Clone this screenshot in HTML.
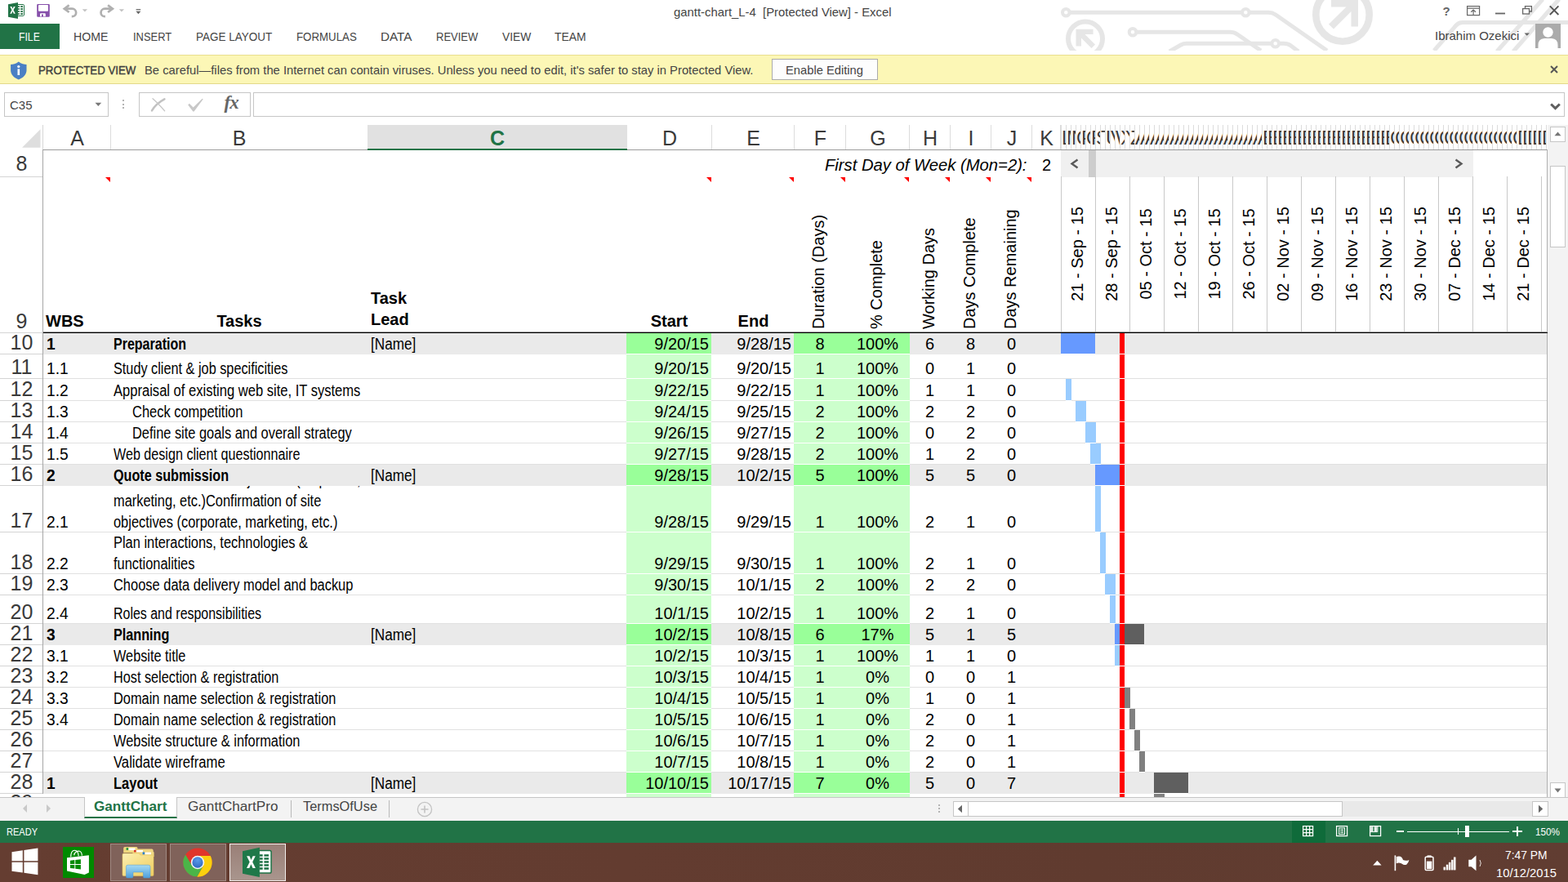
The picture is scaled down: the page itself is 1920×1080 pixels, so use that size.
<!DOCTYPE html>
<html lang="en"><head><meta charset="utf-8"><title>gantt-chart_L-4 [Protected View] - Excel</title>
<style>
html,body{margin:0;padding:0;background:#fff;}
body{width:1920px;height:1080px;overflow:hidden;font-family:"Liberation Sans",sans-serif;}
#root{position:relative;width:1920px;height:1080px;overflow:hidden;background:#fff;}
.a{position:absolute;box-sizing:border-box;}
.t{position:absolute;white-space:pre;display:block;}
svg{position:absolute;overflow:visible;}
.nh{position:absolute;top:153px;height:30px;width:6px;overflow:hidden;box-sizing:border-box;border-left:1px solid #dcdcdc;font-size:24px;line-height:30px;color:#3c3c3c;white-space:pre;}
.nh span{position:absolute;left:0px;top:1px;}
.rot{position:absolute;white-space:pre;font-size:20px;line-height:20px;color:#000;transform-origin:0 0;transform:rotate(-90deg);}
.wrap{position:absolute;font-size:20px;line-height:26px;color:#000;transform-origin:0 100%;white-space:normal;}
.rotc{position:absolute;white-space:pre;font-size:20px;line-height:20px;color:#000;transform:translate(-50%,-50%) rotate(-90deg);}
.sb{-webkit-text-stroke:0.45px #3f3f3f;}

</style></head>
<body>
<div id="root">
<svg style="left:1280px;top:0" width="640" height="62" viewBox="0 0 640 62">
<g fill="none" stroke="#e6e6e6" stroke-width="5">
<path d="M25 15.3 H273 Q278 15.3 282 18 L345 62"/>
<path d="M107 39.2 H226 Q231 39.2 235 42 L264 62"/>
<path d="M152 63 L166 55 Q169 53.3 173 53.3 H292 Q297 53.3 300 55.5 L310 63"/>
<path d="M476 62 L503 31 Q506 27.5 511 27.5 H640"/>
<path d="M553 63 L609 -1"/><path d="M573 63 L629 -1"/>
</g>
<g fill="#fff" stroke="#e6e6e6" stroke-width="4"><circle cx="25.3" cy="15.3" r="4.3"/><circle cx="245.3" cy="15.3" r="4.3"/><circle cx="107" cy="39.2" r="4.3"/><circle cx="281.7" cy="53.3" r="4.3"/></g>
<circle cx="49" cy="47.5" r="21" fill="none" stroke="#e6e6e6" stroke-width="6"/>
<path d="M37.5 35.8 H58.5 V42 H48.5 L61 54.5 L56.5 59 L44 46.5 V56.5 H37.5 Z" fill="#e6e6e6"/>
<circle cx="364" cy="18" r="32.7" fill="none" stroke="#e6e6e6" stroke-width="8.6"/>
<path d="M350 0 H383 V32.6 H374.5 V14 L353 35.6 L347 29.7 L368.5 8.6 H350 Z" fill="#e6e6e6"/>
</svg>
<div class="a" style="left:1280px;top:62px;width:640px;height:5px;background:#fff;"></div>
<svg style="left:0px;top:0px" width="70" height="28" viewBox="0 0 70 28">
<rect x="20.5" y="5.5" width="9" height="13.9" rx="1.2" fill="#fff" stroke="#217346" stroke-width="1"/>
<g fill="#1b6a3c">
<rect x="22.1" y="7.2" width="1.8" height="1.7"/><rect x="25.2" y="7.2" width="2.8" height="1.7"/>
<rect x="22.1" y="10.2" width="1.8" height="1.7"/><rect x="25.2" y="10.2" width="2.8" height="1.7"/>
<rect x="22.1" y="13.2" width="1.8" height="1.7"/><rect x="25.2" y="13.2" width="2.8" height="1.7"/>
<rect x="22.1" y="16.2" width="1.8" height="1.7"/><rect x="25.2" y="16.2" width="2.8" height="1.7"/>
</g>
<path d="M10 5.2 L22 3 V23 L10 20.8 Z" fill="#217346"/>
<path d="M12.3 8 H14.3 L15.5 10.8 L16.8 8 H18.7 L16.5 12.3 L18.8 16.7 H16.8 L15.5 13.8 L14.2 16.7 H12.2 L14.5 12.3 Z" fill="#fff"/>
<rect x="45.2" y="5" width="15.6" height="15.8" rx="1.1" fill="#8750ab"/>
<rect x="47" y="6" width="12" height="7.7" rx="0.8" fill="#fff"/>
<path d="M49 17.2 Q49 16.2 50 16.2 H54.8 Q55.8 16.2 55.8 17.2 V20.2 H52.9 V17.4 H51 V20.2 H49 Z" fill="#fff"/>
</svg>
<svg style="left:70px;top:0px" width="110" height="28" viewBox="70 0 110 28">
<g fill="none" stroke="#b0b0b0" stroke-width="2.7" stroke-linejoin="miter">
<path d="M84.6 6.4 L78.8 10.7 L84.6 15"/>
<path d="M79.5 10.7 H88.4 a4.75 4.75 0 0 1 0 9.5 H87.8"/>
<path d="M132.1 6.4 L137.9 10.7 L132.1 15"/>
<path d="M137.2 10.7 H128.3 a4.75 4.75 0 0 0 0 9.5 H128.9"/>
</g>
<path d="M100.8 11.2 H107 L103.9 14.4 Z" fill="#c2c2c2"/>
<path d="M145.8 11.2 H152 L148.9 14.4 Z" fill="#c2c2c2"/>
<path d="M166.6 11.7 H172.2" stroke="#666" stroke-width="1.2"/><path d="M166.4 13.7 H172.4 L169.4 17.2 Z" fill="#666"/>
</svg>
<span class="t " style="top:6.800000000000001px;left:825px;transform-origin:0 0;font-size:15px;line-height:15px;color:#444444;transform:scaleX(0.9906);">gantt-chart_L-4  [Protected View] - Excel</span>
<span class="t " style="top:5.600000000000001px;left:1766.5px;transform-origin:0 0;font-size:15px;line-height:15px;color:#666;font-weight:bold;">?</span>
<svg style="left:1796px;top:6px" width="118" height="18" viewBox="0 0 118 18">
<g fill="none" stroke="#666" stroke-width="1.2">
<rect x="0.6" y="1.6" width="15" height="11"/><path d="M0.6 4.2 H15.6"/>
<path d="M8.1 12 V6.2 M5.2 8.8 L8.1 6 L11 8.8"/>
</g>
<path d="M35 10.5 H47" stroke="#666" stroke-width="1.8"/>
<g fill="none" stroke="#666" stroke-width="1.3"><path d="M71.5 4.5 V1.6 H79.4 V8 H76.6"/><rect x="68.6" y="4.6" width="7.9" height="6.4" fill="#fff"/></g>
<path d="M101.8 1.4 L112.4 12 M112.4 1.4 L101.8 12" stroke="#555" stroke-width="1.9"/>
</svg>
<span class="t " style="top:35.8px;left:1757px;transform-origin:0 0;font-size:15px;line-height:15px;color:#444444;">Ibrahim Ozekici</span>
<svg style="left:1866px;top:40px" width="7.5" height="4.6" viewBox="0 0 8 5"><path d="M0.5 0.5H7.5L4 4.2Z" fill="#666"/></svg>
<svg style="left:1880px;top:29px" width="31" height="30" viewBox="0 0 31 30"><rect width="31" height="30" fill="#ababab"/>
<circle cx="15.5" cy="10.5" r="6.2" fill="#fff"/><path d="M3.5 30 V26 Q3.5 18.5 11 18 H20 Q27.5 18.5 27.5 26 V30 Z" fill="#fff"/></svg>
<div class="a" style="left:0px;top:29px;width:73px;height:31px;background:#217346;"></div>
<span class="t " style="top:37.3px;left:23px;transform-origin:0 0;font-size:15px;line-height:15px;color:#fff;transform:scaleX(0.8142);">FILE</span>
<span class="t " style="top:37.3px;left:90.3px;transform-origin:0 0;font-size:15px;line-height:15px;color:#444444;transform:scaleX(0.9422);">HOME</span>
<span class="t " style="top:37.3px;left:162.5px;transform-origin:0 0;font-size:15px;line-height:15px;color:#444444;transform:scaleX(0.8605);">INSERT</span>
<span class="t " style="top:37.3px;left:239.5px;transform-origin:0 0;font-size:15px;line-height:15px;color:#444444;transform:scaleX(0.8993);">PAGE LAYOUT</span>
<span class="t " style="top:37.3px;left:362.5px;transform-origin:0 0;font-size:15px;line-height:15px;color:#444444;transform:scaleX(0.8855);">FORMULAS</span>
<span class="t " style="top:37.3px;left:466.2px;transform-origin:0 0;font-size:15px;line-height:15px;color:#444444;transform:scaleX(1.0164);">DATA</span>
<span class="t " style="top:37.3px;left:534.3px;transform-origin:0 0;font-size:15px;line-height:15px;color:#444444;transform:scaleX(0.8667);">REVIEW</span>
<span class="t " style="top:37.3px;left:614.5px;transform-origin:0 0;font-size:15px;line-height:15px;color:#444444;transform:scaleX(0.9206);">VIEW</span>
<span class="t " style="top:37.3px;left:679px;transform-origin:0 0;font-size:15px;line-height:15px;color:#444444;transform:scaleX(0.9263);">TEAM</span>
<div class="a" style="left:0px;top:67px;width:1920px;height:36px;background:#fcf7b6;border-top:1px solid #e9df8f;border-bottom:1px solid #e3d98a;"></div>
<svg style="left:12.2px;top:75px" width="21.6" height="23" viewBox="0 0 20 23" preserveAspectRatio="none">
<path d="M10 0.6 C7 3.4 3.6 4 1 4 V11 C1 16.5 5 20.5 10 22.4 C15 20.5 19 16.5 19 11 V4 C16.4 4 13 3.4 10 0.6 Z" fill="#4a7fc4"/>
<circle cx="10" cy="6.6" r="1.5" fill="#fff"/><rect x="8.8" y="9.4" width="2.4" height="7.6" fill="#fff"/></svg>
<span class="t sb" style="top:78.1px;left:46.5px;transform-origin:0 0;font-size:15px;line-height:15px;color:#3f3f3f;transform:scaleX(0.8836);">PROTECTED VIEW</span>
<span class="t " style="top:78.1px;left:176.5px;transform-origin:0 0;font-size:15px;line-height:15px;color:#444444;transform:scaleX(0.9846);">Be careful—files from the Internet can contain viruses. Unless you need to edit, it's safer to stay in Protected View.</span>
<div class="a" style="left:945px;top:72px;width:130px;height:26px;background:#fdfdfd;border:1px solid #ababab;"></div>
<span class="t " style="top:78.1px;left:961.5px;transform-origin:0 0;font-size:15px;line-height:15px;color:#444444;transform:scaleX(0.9819);">Enable Editing</span>
<svg style="left:1898px;top:80px" width="10" height="10" viewBox="0 0 10 10"><path d="M1 1L9 9M9 1L1 9" stroke="#555" stroke-width="1.9"/></svg>
<div class="a" style="left:5px;top:113px;width:128px;height:30px;background:#fff;border:1px solid #c6c6c6;"></div>
<span class="t " style="top:121.3px;left:12px;transform-origin:0 0;font-size:15px;line-height:15px;color:#444444;">C35</span>
<svg style="left:116px;top:125px" width="9" height="6" viewBox="0 0 9 6"><path d="M0.5 0.8H8.2L4.35 5Z" fill="#777"/></svg>
<div class="a" style="left:150px;top:122px;width:2px;height:2px;background:#b4b4b4;"></div>
<div class="a" style="left:150px;top:126.5px;width:2px;height:2px;background:#b4b4b4;"></div>
<div class="a" style="left:150px;top:131px;width:2px;height:2px;background:#b4b4b4;"></div>
<div class="a" style="left:170px;top:113px;width:137px;height:30px;background:#fff;border:1px solid #c6c6c6;"></div>
<svg style="left:180px;top:112px" width="80" height="32" viewBox="180 112 80 32">
<path d="M186 135.4 Q191 127 201.4 121.4" stroke="#c2c2c2" stroke-width="2.5" fill="none" stroke-linecap="round"/>
<path d="M187 120.8 Q193 126 201.6 135.8" stroke="#c6c6c6" stroke-width="1.3" fill="none" stroke-linecap="round"/>
<path d="M230.2 128.4 L231.8 126.8 L236.6 131.4 L247.7 120.7 L248.7 121.5 L237.6 136.5 L236.3 136.5 Z" fill="#c8c8c8"/>
</svg>
<span class="t" style="left:274.5px;top:113px;font-family:'Liberation Serif',serif;font-style:italic;font-weight:bold;font-size:23px;line-height:26px;color:#666;letter-spacing:-1px">fx</span>
<div class="a" style="left:310px;top:113px;width:1606px;height:30px;background:#fff;border:1px solid #c6c6c6;"></div>
<svg style="left:1898px;top:126px" width="13" height="9" viewBox="0 0 13 9"><path d="M1.2 1.5 L6.5 6.6 L11.8 1.5" stroke="#5e5e5e" stroke-width="3" fill="none"/></svg>
<div class="a" style="left:0px;top:153px;width:1894px;height:31px;background:#fff;"></div>
<svg style="left:25.5px;top:157px" width="24.5" height="25" viewBox="0 0 24 24"><path d="M23 1 V23 H1 Z" fill="#dedede"/></svg>
<div class="a" style="left:450px;top:153px;width:318px;height:31px;background:#e1e1e1;border-bottom:2px solid #217346;"></div>
<span class="t " style="top:157.34px;left:86.16px;transform-origin:0 0;font-size:25px;line-height:25px;color:#3a3a3a;">A</span>
<div class="a" style="left:135px;top:153px;width:1px;height:30px;background:#dcdcdc;"></div>
<span class="t " style="top:157.34px;left:284.66px;transform-origin:0 0;font-size:25px;line-height:25px;color:#3a3a3a;">B</span>
<span class="t " style="top:157.34px;left:599.97px;transform-origin:0 0;font-size:25px;line-height:25px;color:#217346;font-weight:bold;">C</span>
<span class="t " style="top:157.34px;left:810.97px;transform-origin:0 0;font-size:25px;line-height:25px;color:#3a3a3a;">D</span>
<div class="a" style="left:871px;top:153px;width:1px;height:30px;background:#dcdcdc;"></div>
<span class="t " style="top:157.34px;left:914.16px;transform-origin:0 0;font-size:25px;line-height:25px;color:#3a3a3a;">E</span>
<div class="a" style="left:972px;top:153px;width:1px;height:30px;background:#dcdcdc;"></div>
<span class="t " style="top:157.34px;left:996.86px;transform-origin:0 0;font-size:25px;line-height:25px;color:#3a3a3a;">F</span>
<div class="a" style="left:1035px;top:153px;width:1px;height:30px;background:#dcdcdc;"></div>
<span class="t " style="top:157.34px;left:1065.27px;transform-origin:0 0;font-size:25px;line-height:25px;color:#3a3a3a;">G</span>
<div class="a" style="left:1113px;top:153px;width:1px;height:30px;background:#dcdcdc;"></div>
<span class="t " style="top:157.34px;left:1129.97px;transform-origin:0 0;font-size:25px;line-height:25px;color:#3a3a3a;">H</span>
<div class="a" style="left:1163px;top:153px;width:1px;height:30px;background:#dcdcdc;"></div>
<span class="t " style="top:157.34px;left:1185.52px;transform-origin:0 0;font-size:25px;line-height:25px;color:#3a3a3a;">I</span>
<div class="a" style="left:1213px;top:153px;width:1px;height:30px;background:#dcdcdc;"></div>
<span class="t " style="top:157.34px;left:1232.75px;transform-origin:0 0;font-size:25px;line-height:25px;color:#3a3a3a;">J</span>
<div class="a" style="left:1263px;top:153px;width:1px;height:30px;background:#dcdcdc;"></div>
<span class="t " style="top:157.34px;left:1273.16px;transform-origin:0 0;font-size:25px;line-height:25px;color:#3a3a3a;">K</span>
<div class="a" style="left:1298px;top:153px;width:1px;height:30px;background:#dcdcdc;"></div>
<div class="a" style="left:52px;top:153px;width:1px;height:30px;background:#d6d6d6;"></div>
<div class="nh" style="left:1299px"><span>L</span></div>
<div class="nh" style="left:1305px"><span>M</span></div>
<div class="nh" style="left:1311px"><span>N</span></div>
<div class="nh" style="left:1317px"><span>O</span></div>
<div class="nh" style="left:1323px"><span>P</span></div>
<div class="nh" style="left:1329px"><span>Q</span></div>
<div class="nh" style="left:1335px"><span>R</span></div>
<div class="nh" style="left:1341px"><span>S</span></div>
<div class="nh" style="left:1347px"><span>T</span></div>
<div class="nh" style="left:1353px"><span>U</span></div>
<div class="nh" style="left:1359px"><span>V</span></div>
<div class="nh" style="left:1365px"><span>W</span></div>
<div class="nh" style="left:1371px"><span>X</span></div>
<div class="nh" style="left:1377px"><span>Y</span></div>
<div class="nh" style="left:1383px"><span>Z</span></div>
<div class="nh" style="left:1389px"><span>AA</span></div>
<div class="nh" style="left:1395px"><span>AB</span></div>
<div class="nh" style="left:1401px"><span>AC</span></div>
<div class="nh" style="left:1407px"><span>AD</span></div>
<div class="nh" style="left:1413px"><span>AE</span></div>
<div class="nh" style="left:1419px"><span>AF</span></div>
<div class="nh" style="left:1425px"><span>AG</span></div>
<div class="nh" style="left:1431px"><span>AH</span></div>
<div class="nh" style="left:1437px"><span>AI</span></div>
<div class="nh" style="left:1443px"><span>AJ</span></div>
<div class="nh" style="left:1449px"><span>AK</span></div>
<div class="nh" style="left:1455px"><span>AL</span></div>
<div class="nh" style="left:1461px"><span>AM</span></div>
<div class="nh" style="left:1467px"><span>AN</span></div>
<div class="nh" style="left:1473px"><span>AO</span></div>
<div class="nh" style="left:1479px"><span>AP</span></div>
<div class="nh" style="left:1485px"><span>AQ</span></div>
<div class="nh" style="left:1491px"><span>AR</span></div>
<div class="nh" style="left:1497px"><span>AS</span></div>
<div class="nh" style="left:1503px"><span>AT</span></div>
<div class="nh" style="left:1509px"><span>AU</span></div>
<div class="nh" style="left:1515px"><span>AV</span></div>
<div class="nh" style="left:1521px"><span>AW</span></div>
<div class="nh" style="left:1527px"><span>AX</span></div>
<div class="nh" style="left:1533px"><span>AY</span></div>
<div class="nh" style="left:1539px"><span>AZ</span></div>
<div class="nh" style="left:1545px"><span>BA</span></div>
<div class="nh" style="left:1551px"><span>BB</span></div>
<div class="nh" style="left:1557px"><span>BC</span></div>
<div class="nh" style="left:1563px"><span>BD</span></div>
<div class="nh" style="left:1569px"><span>BE</span></div>
<div class="nh" style="left:1575px"><span>BF</span></div>
<div class="nh" style="left:1581px"><span>BG</span></div>
<div class="nh" style="left:1587px"><span>BH</span></div>
<div class="nh" style="left:1593px"><span>BI</span></div>
<div class="nh" style="left:1599px"><span>BJ</span></div>
<div class="nh" style="left:1605px"><span>BK</span></div>
<div class="nh" style="left:1611px"><span>BL</span></div>
<div class="nh" style="left:1617px"><span>BM</span></div>
<div class="nh" style="left:1623px"><span>BN</span></div>
<div class="nh" style="left:1629px"><span>BO</span></div>
<div class="nh" style="left:1635px"><span>BP</span></div>
<div class="nh" style="left:1641px"><span>BQ</span></div>
<div class="nh" style="left:1647px"><span>BR</span></div>
<div class="nh" style="left:1653px"><span>BS</span></div>
<div class="nh" style="left:1659px"><span>BT</span></div>
<div class="nh" style="left:1665px"><span>BU</span></div>
<div class="nh" style="left:1671px"><span>BV</span></div>
<div class="nh" style="left:1677px"><span>BW</span></div>
<div class="nh" style="left:1683px"><span>BX</span></div>
<div class="nh" style="left:1689px"><span>BY</span></div>
<div class="nh" style="left:1695px"><span>BZ</span></div>
<div class="nh" style="left:1701px"><span>CA</span></div>
<div class="nh" style="left:1707px"><span>CB</span></div>
<div class="nh" style="left:1713px"><span>CC</span></div>
<div class="nh" style="left:1719px"><span>CD</span></div>
<div class="nh" style="left:1725px"><span>CE</span></div>
<div class="nh" style="left:1731px"><span>CF</span></div>
<div class="nh" style="left:1737px"><span>CG</span></div>
<div class="nh" style="left:1743px"><span>CH</span></div>
<div class="nh" style="left:1749px"><span>CI</span></div>
<div class="nh" style="left:1755px"><span>CJ</span></div>
<div class="nh" style="left:1761px"><span>CK</span></div>
<div class="nh" style="left:1767px"><span>CL</span></div>
<div class="nh" style="left:1773px"><span>CM</span></div>
<div class="nh" style="left:1779px"><span>CN</span></div>
<div class="nh" style="left:1785px"><span>CO</span></div>
<div class="nh" style="left:1791px"><span>CP</span></div>
<div class="nh" style="left:1797px"><span>CQ</span></div>
<div class="nh" style="left:1803px"><span>CR</span></div>
<div class="nh" style="left:1809px"><span>CS</span></div>
<div class="nh" style="left:1815px"><span>CT</span></div>
<div class="nh" style="left:1821px"><span>CU</span></div>
<div class="nh" style="left:1827px"><span>CV</span></div>
<div class="nh" style="left:1833px"><span>CW</span></div>
<div class="nh" style="left:1839px"><span>CX</span></div>
<div class="nh" style="left:1845px"><span>CY</span></div>
<div class="nh" style="left:1851px"><span>CZ</span></div>
<div class="nh" style="left:1857px"><span>DA</span></div>
<div class="nh" style="left:1863px"><span>DB</span></div>
<div class="nh" style="left:1869px"><span>DC</span></div>
<div class="nh" style="left:1875px"><span>DD</span></div>
<div class="nh" style="left:1881px"><span>DE</span></div>
<div class="nh" style="left:1887px"><span>DF</span></div>
<div class="a" style="left:1893px;top:153px;width:1px;height:30px;background:#dcdcdc;"></div>
<div class="a" style="left:53px;top:183px;width:1841px;height:1px;background:#9b9b9b;"></div>
<div class="a" style="left:450px;top:182px;width:318px;height:2px;background:#217346;"></div>
<div class="a" style="left:52px;top:183px;width:1px;height:793px;background:#a6a6a6;"></div>
<div class="a" style="left:1894px;top:183px;width:1px;height:793px;background:#b0b0b0;"></div>
<span class="t " style="top:188.14000000000001px;left:19.55px;transform-origin:0 0;font-size:25px;line-height:25px;color:#3a3a3a;">8</span>
<div class="a" style="left:0px;top:216px;width:52px;height:1px;background:#d4d4d4;"></div>
<span class="t " style="top:191.57px;left:1010px;transform-origin:0 0;font-size:20px;line-height:20px;color:#000;font-style:italic;transform:scaleX(1.0114);">First Day of Week (Mon=2):</span>
<span class="t " style="top:191.57px;left:1275.94px;transform-origin:0 0;font-size:20px;line-height:20px;color:#000;">2</span>
<div class="a" style="left:1299px;top:184px;width:505px;height:33px;background:#f0f0f0;"></div>
<div class="a" style="left:1333px;top:184px;width:9px;height:33px;background:#cdcdcd;"></div>
<svg style="left:1310px;top:194px" width="12" height="13" viewBox="0 0 12 13"><path d="M9.5 1.5 L2.5 6.5 L9.5 11.5" stroke="#5a5a5a" stroke-width="2.4" fill="none"/></svg>
<svg style="left:1780px;top:194px" width="12" height="13" viewBox="0 0 12 13"><path d="M2.5 1.5 L9.5 6.5 L2.5 11.5" stroke="#5a5a5a" stroke-width="2.4" fill="none"/></svg>
<span class="t " style="top:381.23999999999995px;left:19.55px;transform-origin:0 0;font-size:25px;line-height:25px;color:#3a3a3a;">9</span>
<div class="a" style="left:0px;top:407px;width:52px;height:1px;background:#d4d4d4;"></div>
<svg style="left:129px;top:217px" width="6" height="6" viewBox="0 0 6 6"><path d="M0 0H6V6Z" fill="#ff0000"/></svg>
<svg style="left:865px;top:217px" width="6" height="6" viewBox="0 0 6 6"><path d="M0 0H6V6Z" fill="#ff0000"/></svg>
<svg style="left:966px;top:217px" width="6" height="6" viewBox="0 0 6 6"><path d="M0 0H6V6Z" fill="#ff0000"/></svg>
<svg style="left:1029px;top:217px" width="6" height="6" viewBox="0 0 6 6"><path d="M0 0H6V6Z" fill="#ff0000"/></svg>
<svg style="left:1107px;top:217px" width="6" height="6" viewBox="0 0 6 6"><path d="M0 0H6V6Z" fill="#ff0000"/></svg>
<svg style="left:1157px;top:217px" width="6" height="6" viewBox="0 0 6 6"><path d="M0 0H6V6Z" fill="#ff0000"/></svg>
<svg style="left:1207px;top:217px" width="6" height="6" viewBox="0 0 6 6"><path d="M0 0H6V6Z" fill="#ff0000"/></svg>
<svg style="left:1257px;top:217px" width="6" height="6" viewBox="0 0 6 6"><path d="M0 0H6V6Z" fill="#ff0000"/></svg>
<span class="t " style="top:383.07px;left:56px;transform-origin:0 0;font-size:20px;line-height:20px;color:#000;font-weight:bold;">WBS</span>
<span class="t " style="top:383.07px;left:265.38px;transform-origin:0 0;font-size:20px;line-height:20px;color:#000;font-weight:bold;">Tasks</span>
<span class="t " style="top:355.07px;left:454px;transform-origin:0 0;font-size:20px;line-height:20px;color:#000;font-weight:bold;">Task</span>
<span class="t " style="top:381.07px;left:454px;transform-origin:0 0;font-size:20px;line-height:20px;color:#000;font-weight:bold;">Lead</span>
<span class="t " style="top:383.07px;left:796.71px;transform-origin:0 0;font-size:20px;line-height:20px;color:#000;font-weight:bold;">Start</span>
<span class="t " style="top:383.07px;left:903.61px;transform-origin:0 0;font-size:20px;line-height:20px;color:#000;font-weight:bold;">End</span>
<span class="rot" style="left:992.0px;top:403px">Duration (Days)</span>
<span class="rot" style="left:1062.5px;top:403px">% Complete</span>
<span class="rot" style="left:1126.5px;top:403px">Working Days</span>
<span class="rot" style="left:1176.5px;top:403px">Days Complete</span>
<span class="rot" style="left:1226.5px;top:403px">Days Remaining</span>
<div class="a" style="left:1299px;top:216px;width:1px;height:191px;background:#c9c9c9;"></div>
<div class="a" style="left:1341px;top:216px;width:1px;height:191px;background:#c9c9c9;"></div>
<div class="a" style="left:1383px;top:216px;width:1px;height:191px;background:#c9c9c9;"></div>
<div class="a" style="left:1425px;top:216px;width:1px;height:191px;background:#c9c9c9;"></div>
<div class="a" style="left:1467px;top:216px;width:1px;height:191px;background:#c9c9c9;"></div>
<div class="a" style="left:1509px;top:216px;width:1px;height:191px;background:#c9c9c9;"></div>
<div class="a" style="left:1551px;top:216px;width:1px;height:191px;background:#c9c9c9;"></div>
<div class="a" style="left:1593px;top:216px;width:1px;height:191px;background:#c9c9c9;"></div>
<div class="a" style="left:1635px;top:216px;width:1px;height:191px;background:#c9c9c9;"></div>
<div class="a" style="left:1677px;top:216px;width:1px;height:191px;background:#c9c9c9;"></div>
<div class="a" style="left:1719px;top:216px;width:1px;height:191px;background:#c9c9c9;"></div>
<div class="a" style="left:1761px;top:216px;width:1px;height:191px;background:#c9c9c9;"></div>
<div class="a" style="left:1803px;top:216px;width:1px;height:191px;background:#c9c9c9;"></div>
<div class="a" style="left:1845px;top:216px;width:1px;height:191px;background:#c9c9c9;"></div>
<div class="a" style="left:1887px;top:216px;width:1px;height:191px;background:#c9c9c9;"></div>
<span class="rotc" style="left:1318.8px;top:310.6px">21 - Sep - 15</span>
<span class="rotc" style="left:1360.8px;top:310.6px">28 - Sep - 15</span>
<span class="rotc" style="left:1402.8px;top:310.6px">05 - Oct - 15</span>
<span class="rotc" style="left:1444.8px;top:310.6px">12 - Oct - 15</span>
<span class="rotc" style="left:1486.8px;top:310.6px">19 - Oct - 15</span>
<span class="rotc" style="left:1528.8px;top:310.6px">26 - Oct - 15</span>
<span class="rotc" style="left:1570.8px;top:310.6px">02 - Nov - 15</span>
<span class="rotc" style="left:1612.8px;top:310.6px">09 - Nov - 15</span>
<span class="rotc" style="left:1654.8px;top:310.6px">16 - Nov - 15</span>
<span class="rotc" style="left:1696.8px;top:310.6px">23 - Nov - 15</span>
<span class="rotc" style="left:1738.8px;top:310.6px">30 - Nov - 15</span>
<span class="rotc" style="left:1780.8px;top:310.6px">07 - Dec - 15</span>
<span class="rotc" style="left:1822.8px;top:310.6px">14 - Dec - 15</span>
<span class="rotc" style="left:1864.8px;top:310.6px">21 - Dec - 15</span>
<div class="a" style="left:53px;top:406px;width:1842px;height:1px;background:#9a9a9a;"></div>
<div class="a" style="left:53px;top:407px;width:1842px;height:1px;background:#000;"></div>
<span class="t " style="top:407.23999999999995px;left:12.59px;transform-origin:0 0;font-size:25px;line-height:25px;color:#3a3a3a;">10</span>
<div class="a" style="left:0px;top:433px;width:52px;height:1px;background:#d4d4d4;"></div>
<div class="a" style="left:53px;top:408px;width:1841px;height:26px;background:#eaeaea;"></div>
<div class="a" style="left:767px;top:408px;width:104px;height:26px;background:#99ff99;border-bottom:1px solid #fff;"></div>
<div class="a" style="left:972px;top:408px;width:142px;height:26px;background:#99ff99;border-bottom:1px solid #fff;"></div>
<span class="t " style="top:411.07px;left:56.5px;transform-origin:0 0;font-size:20px;line-height:20px;color:#000;font-weight:bold;transform:scaleX(0.9600);">1</span>
<span class="t " style="top:411.07px;left:138.6px;transform-origin:0 0;font-size:20px;line-height:20px;color:#000;font-weight:bold;transform:scaleX(0.8007);">Preparation</span>
<span class="t " style="top:411.07px;left:454px;transform-origin:0 0;font-size:20px;line-height:20px;color:#000;transform:scaleX(0.8578);">[Name]</span>
<span class="t " style="top:411.07px;right:1052px;transform-origin:100% 0;font-size:20px;line-height:20px;color:#000;">9/20/15</span>
<span class="t " style="top:411.07px;right:951px;transform-origin:100% 0;font-size:20px;line-height:20px;color:#000;">9/28/15</span>
<span class="t " style="top:411.07px;left:998.44px;transform-origin:0 0;font-size:20px;line-height:20px;color:#000;">8</span>
<span class="t " style="top:411.07px;left:1048.92px;transform-origin:0 0;font-size:20px;line-height:20px;color:#000;">100%</span>
<span class="t " style="top:411.07px;left:1132.94px;transform-origin:0 0;font-size:20px;line-height:20px;color:#000;">6</span>
<span class="t " style="top:411.07px;left:1182.94px;transform-origin:0 0;font-size:20px;line-height:20px;color:#000;">8</span>
<span class="t " style="top:411.07px;left:1232.94px;transform-origin:0 0;font-size:20px;line-height:20px;color:#000;">0</span>
<div class="a" style="left:1299px;top:408px;width:42px;height:26px;background:#6699ff;border-bottom:1px solid #fff;"></div>
<div class="a" style="left:1371px;top:408px;width:6px;height:26px;background:#ff0000;border-bottom:1px solid #fff;"></div>
<span class="t " style="top:437.23999999999995px;left:13.52px;transform-origin:0 0;font-size:25px;line-height:25px;color:#3a3a3a;">11</span>
<div class="a" style="left:0px;top:463px;width:52px;height:1px;background:#d4d4d4;"></div>
<div class="a" style="left:53px;top:463px;width:1841px;height:1px;background:#e1e1e1;"></div>
<div class="a" style="left:767px;top:434px;width:104px;height:30px;background:#ccffcc;border-bottom:1px solid #fff;"></div>
<div class="a" style="left:972px;top:434px;width:142px;height:30px;background:#ccffcc;border-bottom:1px solid #fff;"></div>
<span class="t " style="top:441.07px;left:56.5px;transform-origin:0 0;font-size:20px;line-height:20px;color:#000;transform:scaleX(0.9600);">1.1</span>
<span class="t " style="top:441.07px;left:138.6px;transform-origin:0 0;font-size:20px;line-height:20px;color:#000;transform:scaleX(0.8134);">Study client &amp; job specificities</span>
<span class="t " style="top:441.07px;right:1052px;transform-origin:100% 0;font-size:20px;line-height:20px;color:#000;">9/20/15</span>
<span class="t " style="top:441.07px;right:951px;transform-origin:100% 0;font-size:20px;line-height:20px;color:#000;">9/20/15</span>
<span class="t " style="top:441.07px;left:998.44px;transform-origin:0 0;font-size:20px;line-height:20px;color:#000;">1</span>
<span class="t " style="top:441.07px;left:1048.92px;transform-origin:0 0;font-size:20px;line-height:20px;color:#000;">100%</span>
<span class="t " style="top:441.07px;left:1132.94px;transform-origin:0 0;font-size:20px;line-height:20px;color:#000;">0</span>
<span class="t " style="top:441.07px;left:1182.94px;transform-origin:0 0;font-size:20px;line-height:20px;color:#000;">1</span>
<span class="t " style="top:441.07px;left:1232.94px;transform-origin:0 0;font-size:20px;line-height:20px;color:#000;">0</span>
<div class="a" style="left:1371px;top:434px;width:6px;height:30px;background:#ff0000;border-bottom:1px solid #fff;"></div>
<span class="t " style="top:464.23999999999995px;left:12.59px;transform-origin:0 0;font-size:25px;line-height:25px;color:#3a3a3a;">12</span>
<div class="a" style="left:0px;top:490px;width:52px;height:1px;background:#d4d4d4;"></div>
<div class="a" style="left:53px;top:490px;width:1841px;height:1px;background:#e1e1e1;"></div>
<div class="a" style="left:767px;top:464px;width:104px;height:27px;background:#ccffcc;border-bottom:1px solid #fff;"></div>
<div class="a" style="left:972px;top:464px;width:142px;height:27px;background:#ccffcc;border-bottom:1px solid #fff;"></div>
<span class="t " style="top:468.07px;left:56.5px;transform-origin:0 0;font-size:20px;line-height:20px;color:#000;transform:scaleX(0.9600);">1.2</span>
<span class="t " style="top:468.07px;left:138.6px;transform-origin:0 0;font-size:20px;line-height:20px;color:#000;transform:scaleX(0.8277);">Appraisal of existing web site, IT systems</span>
<span class="t " style="top:468.07px;right:1052px;transform-origin:100% 0;font-size:20px;line-height:20px;color:#000;">9/22/15</span>
<span class="t " style="top:468.07px;right:951px;transform-origin:100% 0;font-size:20px;line-height:20px;color:#000;">9/22/15</span>
<span class="t " style="top:468.07px;left:998.44px;transform-origin:0 0;font-size:20px;line-height:20px;color:#000;">1</span>
<span class="t " style="top:468.07px;left:1048.92px;transform-origin:0 0;font-size:20px;line-height:20px;color:#000;">100%</span>
<span class="t " style="top:468.07px;left:1132.94px;transform-origin:0 0;font-size:20px;line-height:20px;color:#000;">1</span>
<span class="t " style="top:468.07px;left:1182.94px;transform-origin:0 0;font-size:20px;line-height:20px;color:#000;">1</span>
<span class="t " style="top:468.07px;left:1232.94px;transform-origin:0 0;font-size:20px;line-height:20px;color:#000;">0</span>
<div class="a" style="left:1305px;top:464px;width:7px;height:27px;background:#99ccff;border-bottom:1px solid #fff;"></div>
<div class="a" style="left:1371px;top:464px;width:6px;height:27px;background:#ff0000;border-bottom:1px solid #fff;"></div>
<span class="t " style="top:490.23999999999995px;left:12.59px;transform-origin:0 0;font-size:25px;line-height:25px;color:#3a3a3a;">13</span>
<div class="a" style="left:0px;top:516px;width:52px;height:1px;background:#d4d4d4;"></div>
<div class="a" style="left:53px;top:516px;width:1841px;height:1px;background:#e1e1e1;"></div>
<div class="a" style="left:767px;top:491px;width:104px;height:26px;background:#ccffcc;border-bottom:1px solid #fff;"></div>
<div class="a" style="left:972px;top:491px;width:142px;height:26px;background:#ccffcc;border-bottom:1px solid #fff;"></div>
<span class="t " style="top:494.07px;left:56.5px;transform-origin:0 0;font-size:20px;line-height:20px;color:#000;transform:scaleX(0.9600);">1.3</span>
<span class="t " style="top:494.07px;left:161.6px;transform-origin:0 0;font-size:20px;line-height:20px;color:#000;transform:scaleX(0.8229);">Check competition</span>
<span class="t " style="top:494.07px;right:1052px;transform-origin:100% 0;font-size:20px;line-height:20px;color:#000;">9/24/15</span>
<span class="t " style="top:494.07px;right:951px;transform-origin:100% 0;font-size:20px;line-height:20px;color:#000;">9/25/15</span>
<span class="t " style="top:494.07px;left:998.44px;transform-origin:0 0;font-size:20px;line-height:20px;color:#000;">2</span>
<span class="t " style="top:494.07px;left:1048.92px;transform-origin:0 0;font-size:20px;line-height:20px;color:#000;">100%</span>
<span class="t " style="top:494.07px;left:1132.94px;transform-origin:0 0;font-size:20px;line-height:20px;color:#000;">2</span>
<span class="t " style="top:494.07px;left:1182.94px;transform-origin:0 0;font-size:20px;line-height:20px;color:#000;">2</span>
<span class="t " style="top:494.07px;left:1232.94px;transform-origin:0 0;font-size:20px;line-height:20px;color:#000;">0</span>
<div class="a" style="left:1317px;top:491px;width:13px;height:26px;background:#99ccff;border-bottom:1px solid #fff;"></div>
<div class="a" style="left:1371px;top:491px;width:6px;height:26px;background:#ff0000;border-bottom:1px solid #fff;"></div>
<span class="t " style="top:516.24px;left:12.59px;transform-origin:0 0;font-size:25px;line-height:25px;color:#3a3a3a;">14</span>
<div class="a" style="left:0px;top:542px;width:52px;height:1px;background:#d4d4d4;"></div>
<div class="a" style="left:53px;top:542px;width:1841px;height:1px;background:#e1e1e1;"></div>
<div class="a" style="left:767px;top:517px;width:104px;height:26px;background:#ccffcc;border-bottom:1px solid #fff;"></div>
<div class="a" style="left:972px;top:517px;width:142px;height:26px;background:#ccffcc;border-bottom:1px solid #fff;"></div>
<span class="t " style="top:520.07px;left:56.5px;transform-origin:0 0;font-size:20px;line-height:20px;color:#000;transform:scaleX(0.9600);">1.4</span>
<span class="t " style="top:520.07px;left:161.6px;transform-origin:0 0;font-size:20px;line-height:20px;color:#000;transform:scaleX(0.8193);">Define site goals and overall strategy</span>
<span class="t " style="top:520.07px;right:1052px;transform-origin:100% 0;font-size:20px;line-height:20px;color:#000;">9/26/15</span>
<span class="t " style="top:520.07px;right:951px;transform-origin:100% 0;font-size:20px;line-height:20px;color:#000;">9/27/15</span>
<span class="t " style="top:520.07px;left:998.44px;transform-origin:0 0;font-size:20px;line-height:20px;color:#000;">2</span>
<span class="t " style="top:520.07px;left:1048.92px;transform-origin:0 0;font-size:20px;line-height:20px;color:#000;">100%</span>
<span class="t " style="top:520.07px;left:1132.94px;transform-origin:0 0;font-size:20px;line-height:20px;color:#000;">0</span>
<span class="t " style="top:520.07px;left:1182.94px;transform-origin:0 0;font-size:20px;line-height:20px;color:#000;">2</span>
<span class="t " style="top:520.07px;left:1232.94px;transform-origin:0 0;font-size:20px;line-height:20px;color:#000;">0</span>
<div class="a" style="left:1329px;top:517px;width:13px;height:26px;background:#99ccff;border-bottom:1px solid #fff;"></div>
<div class="a" style="left:1371px;top:517px;width:6px;height:26px;background:#ff0000;border-bottom:1px solid #fff;"></div>
<span class="t " style="top:542.24px;left:12.59px;transform-origin:0 0;font-size:25px;line-height:25px;color:#3a3a3a;">15</span>
<div class="a" style="left:0px;top:568px;width:52px;height:1px;background:#d4d4d4;"></div>
<div class="a" style="left:53px;top:568px;width:1841px;height:1px;background:#e1e1e1;"></div>
<div class="a" style="left:767px;top:543px;width:104px;height:26px;background:#ccffcc;border-bottom:1px solid #fff;"></div>
<div class="a" style="left:972px;top:543px;width:142px;height:26px;background:#ccffcc;border-bottom:1px solid #fff;"></div>
<span class="t " style="top:546.07px;left:56.5px;transform-origin:0 0;font-size:20px;line-height:20px;color:#000;transform:scaleX(0.9600);">1.5</span>
<span class="t " style="top:546.07px;left:138.6px;transform-origin:0 0;font-size:20px;line-height:20px;color:#000;transform:scaleX(0.8066);">Web design client questionnaire</span>
<span class="t " style="top:546.07px;right:1052px;transform-origin:100% 0;font-size:20px;line-height:20px;color:#000;">9/27/15</span>
<span class="t " style="top:546.07px;right:951px;transform-origin:100% 0;font-size:20px;line-height:20px;color:#000;">9/28/15</span>
<span class="t " style="top:546.07px;left:998.44px;transform-origin:0 0;font-size:20px;line-height:20px;color:#000;">2</span>
<span class="t " style="top:546.07px;left:1048.92px;transform-origin:0 0;font-size:20px;line-height:20px;color:#000;">100%</span>
<span class="t " style="top:546.07px;left:1132.94px;transform-origin:0 0;font-size:20px;line-height:20px;color:#000;">1</span>
<span class="t " style="top:546.07px;left:1182.94px;transform-origin:0 0;font-size:20px;line-height:20px;color:#000;">2</span>
<span class="t " style="top:546.07px;left:1232.94px;transform-origin:0 0;font-size:20px;line-height:20px;color:#000;">0</span>
<div class="a" style="left:1335px;top:543px;width:13px;height:26px;background:#99ccff;border-bottom:1px solid #fff;"></div>
<div class="a" style="left:1371px;top:543px;width:6px;height:26px;background:#ff0000;border-bottom:1px solid #fff;"></div>
<span class="t " style="top:568.24px;left:12.59px;transform-origin:0 0;font-size:25px;line-height:25px;color:#3a3a3a;">16</span>
<div class="a" style="left:0px;top:594px;width:52px;height:1px;background:#d4d4d4;"></div>
<div class="a" style="left:53px;top:569px;width:1841px;height:26px;background:#eaeaea;"></div>
<div class="a" style="left:767px;top:569px;width:104px;height:26px;background:#99ff99;border-bottom:1px solid #fff;"></div>
<div class="a" style="left:972px;top:569px;width:142px;height:26px;background:#99ff99;border-bottom:1px solid #fff;"></div>
<span class="t " style="top:572.07px;left:56.5px;transform-origin:0 0;font-size:20px;line-height:20px;color:#000;font-weight:bold;transform:scaleX(0.9600);">2</span>
<span class="t " style="top:572.07px;left:138.6px;transform-origin:0 0;font-size:20px;line-height:20px;color:#000;font-weight:bold;transform:scaleX(0.8082);">Quote submission</span>
<span class="t " style="top:572.07px;left:454px;transform-origin:0 0;font-size:20px;line-height:20px;color:#000;transform:scaleX(0.8578);">[Name]</span>
<span class="t " style="top:572.07px;right:1052px;transform-origin:100% 0;font-size:20px;line-height:20px;color:#000;">9/28/15</span>
<span class="t " style="top:572.07px;right:951px;transform-origin:100% 0;font-size:20px;line-height:20px;color:#000;">10/2/15</span>
<span class="t " style="top:572.07px;left:998.44px;transform-origin:0 0;font-size:20px;line-height:20px;color:#000;">5</span>
<span class="t " style="top:572.07px;left:1048.92px;transform-origin:0 0;font-size:20px;line-height:20px;color:#000;">100%</span>
<span class="t " style="top:572.07px;left:1132.94px;transform-origin:0 0;font-size:20px;line-height:20px;color:#000;">5</span>
<span class="t " style="top:572.07px;left:1182.94px;transform-origin:0 0;font-size:20px;line-height:20px;color:#000;">5</span>
<span class="t " style="top:572.07px;left:1232.94px;transform-origin:0 0;font-size:20px;line-height:20px;color:#000;">0</span>
<div class="a" style="left:1341px;top:569px;width:30px;height:26px;background:#6699ff;border-bottom:1px solid #fff;"></div>
<div class="a" style="left:1371px;top:569px;width:6px;height:26px;background:#ff0000;border-bottom:1px solid #fff;"></div>
<span class="t " style="top:625.24px;left:12.59px;transform-origin:0 0;font-size:25px;line-height:25px;color:#3a3a3a;">17</span>
<div class="a" style="left:0px;top:651px;width:52px;height:1px;background:#d4d4d4;"></div>
<div class="a" style="left:53px;top:651px;width:1841px;height:1px;background:#e1e1e1;"></div>
<div class="a" style="left:767px;top:595px;width:104px;height:57px;background:#ccffcc;border-bottom:1px solid #fff;"></div>
<div class="a" style="left:972px;top:595px;width:142px;height:57px;background:#ccffcc;border-bottom:1px solid #fff;"></div>
<span class="t " style="top:629.07px;left:56.5px;transform-origin:0 0;font-size:20px;line-height:20px;color:#000;transform:scaleX(0.9600);">2.1</span>
<span class="t " style="top:629.07px;right:1052px;transform-origin:100% 0;font-size:20px;line-height:20px;color:#000;">9/28/15</span>
<span class="t " style="top:629.07px;right:951px;transform-origin:100% 0;font-size:20px;line-height:20px;color:#000;">9/29/15</span>
<span class="t " style="top:629.07px;left:998.44px;transform-origin:0 0;font-size:20px;line-height:20px;color:#000;">1</span>
<span class="t " style="top:629.07px;left:1048.92px;transform-origin:0 0;font-size:20px;line-height:20px;color:#000;">100%</span>
<span class="t " style="top:629.07px;left:1132.94px;transform-origin:0 0;font-size:20px;line-height:20px;color:#000;">2</span>
<span class="t " style="top:629.07px;left:1182.94px;transform-origin:0 0;font-size:20px;line-height:20px;color:#000;">1</span>
<span class="t " style="top:629.07px;left:1232.94px;transform-origin:0 0;font-size:20px;line-height:20px;color:#000;">0</span>
<div class="a" style="left:1341px;top:595px;width:7px;height:57px;background:#99ccff;border-bottom:1px solid #fff;"></div>
<div class="a" style="left:1371px;top:595px;width:6px;height:57px;background:#ff0000;border-bottom:1px solid #fff;"></div>
<span class="t " style="top:676.24px;left:12.59px;transform-origin:0 0;font-size:25px;line-height:25px;color:#3a3a3a;">18</span>
<div class="a" style="left:0px;top:702px;width:52px;height:1px;background:#d4d4d4;"></div>
<div class="a" style="left:53px;top:702px;width:1841px;height:1px;background:#e1e1e1;"></div>
<div class="a" style="left:767px;top:652px;width:104px;height:51px;background:#ccffcc;border-bottom:1px solid #fff;"></div>
<div class="a" style="left:972px;top:652px;width:142px;height:51px;background:#ccffcc;border-bottom:1px solid #fff;"></div>
<span class="t " style="top:680.07px;left:56.5px;transform-origin:0 0;font-size:20px;line-height:20px;color:#000;transform:scaleX(0.9600);">2.2</span>
<span class="t " style="top:680.07px;right:1052px;transform-origin:100% 0;font-size:20px;line-height:20px;color:#000;">9/29/15</span>
<span class="t " style="top:680.07px;right:951px;transform-origin:100% 0;font-size:20px;line-height:20px;color:#000;">9/30/15</span>
<span class="t " style="top:680.07px;left:998.44px;transform-origin:0 0;font-size:20px;line-height:20px;color:#000;">1</span>
<span class="t " style="top:680.07px;left:1048.92px;transform-origin:0 0;font-size:20px;line-height:20px;color:#000;">100%</span>
<span class="t " style="top:680.07px;left:1132.94px;transform-origin:0 0;font-size:20px;line-height:20px;color:#000;">2</span>
<span class="t " style="top:680.07px;left:1182.94px;transform-origin:0 0;font-size:20px;line-height:20px;color:#000;">1</span>
<span class="t " style="top:680.07px;left:1232.94px;transform-origin:0 0;font-size:20px;line-height:20px;color:#000;">0</span>
<div class="a" style="left:1347px;top:652px;width:7px;height:51px;background:#99ccff;border-bottom:1px solid #fff;"></div>
<div class="a" style="left:1371px;top:652px;width:6px;height:51px;background:#ff0000;border-bottom:1px solid #fff;"></div>
<span class="t " style="top:702.24px;left:12.59px;transform-origin:0 0;font-size:25px;line-height:25px;color:#3a3a3a;">19</span>
<div class="a" style="left:0px;top:728px;width:52px;height:1px;background:#d4d4d4;"></div>
<div class="a" style="left:53px;top:728px;width:1841px;height:1px;background:#e1e1e1;"></div>
<div class="a" style="left:767px;top:703px;width:104px;height:26px;background:#ccffcc;border-bottom:1px solid #fff;"></div>
<div class="a" style="left:972px;top:703px;width:142px;height:26px;background:#ccffcc;border-bottom:1px solid #fff;"></div>
<span class="t " style="top:706.07px;left:56.5px;transform-origin:0 0;font-size:20px;line-height:20px;color:#000;transform:scaleX(0.9600);">2.3</span>
<span class="t " style="top:706.07px;left:138.6px;transform-origin:0 0;font-size:20px;line-height:20px;color:#000;transform:scaleX(0.8221);">Choose data delivery model and backup</span>
<span class="t " style="top:706.07px;right:1052px;transform-origin:100% 0;font-size:20px;line-height:20px;color:#000;">9/30/15</span>
<span class="t " style="top:706.07px;right:951px;transform-origin:100% 0;font-size:20px;line-height:20px;color:#000;">10/1/15</span>
<span class="t " style="top:706.07px;left:998.44px;transform-origin:0 0;font-size:20px;line-height:20px;color:#000;">2</span>
<span class="t " style="top:706.07px;left:1048.92px;transform-origin:0 0;font-size:20px;line-height:20px;color:#000;">100%</span>
<span class="t " style="top:706.07px;left:1132.94px;transform-origin:0 0;font-size:20px;line-height:20px;color:#000;">2</span>
<span class="t " style="top:706.07px;left:1182.94px;transform-origin:0 0;font-size:20px;line-height:20px;color:#000;">2</span>
<span class="t " style="top:706.07px;left:1232.94px;transform-origin:0 0;font-size:20px;line-height:20px;color:#000;">0</span>
<div class="a" style="left:1353px;top:703px;width:13px;height:26px;background:#99ccff;border-bottom:1px solid #fff;"></div>
<div class="a" style="left:1371px;top:703px;width:6px;height:26px;background:#ff0000;border-bottom:1px solid #fff;"></div>
<span class="t " style="top:737.24px;left:12.59px;transform-origin:0 0;font-size:25px;line-height:25px;color:#3a3a3a;">20</span>
<div class="a" style="left:0px;top:763px;width:52px;height:1px;background:#d4d4d4;"></div>
<div class="a" style="left:53px;top:763px;width:1841px;height:1px;background:#e1e1e1;"></div>
<div class="a" style="left:767px;top:729px;width:104px;height:35px;background:#ccffcc;border-bottom:1px solid #fff;"></div>
<div class="a" style="left:972px;top:729px;width:142px;height:35px;background:#ccffcc;border-bottom:1px solid #fff;"></div>
<span class="t " style="top:741.07px;left:56.5px;transform-origin:0 0;font-size:20px;line-height:20px;color:#000;transform:scaleX(0.9600);">2.4</span>
<span class="t " style="top:741.07px;left:138.6px;transform-origin:0 0;font-size:20px;line-height:20px;color:#000;transform:scaleX(0.7981);">Roles and responsibilities</span>
<span class="t " style="top:741.07px;right:1052px;transform-origin:100% 0;font-size:20px;line-height:20px;color:#000;">10/1/15</span>
<span class="t " style="top:741.07px;right:951px;transform-origin:100% 0;font-size:20px;line-height:20px;color:#000;">10/2/15</span>
<span class="t " style="top:741.07px;left:998.44px;transform-origin:0 0;font-size:20px;line-height:20px;color:#000;">1</span>
<span class="t " style="top:741.07px;left:1048.92px;transform-origin:0 0;font-size:20px;line-height:20px;color:#000;">100%</span>
<span class="t " style="top:741.07px;left:1132.94px;transform-origin:0 0;font-size:20px;line-height:20px;color:#000;">2</span>
<span class="t " style="top:741.07px;left:1182.94px;transform-origin:0 0;font-size:20px;line-height:20px;color:#000;">1</span>
<span class="t " style="top:741.07px;left:1232.94px;transform-origin:0 0;font-size:20px;line-height:20px;color:#000;">0</span>
<div class="a" style="left:1359px;top:729px;width:7px;height:35px;background:#99ccff;border-bottom:1px solid #fff;"></div>
<div class="a" style="left:1371px;top:729px;width:6px;height:35px;background:#ff0000;border-bottom:1px solid #fff;"></div>
<span class="t " style="top:763.24px;left:12.59px;transform-origin:0 0;font-size:25px;line-height:25px;color:#3a3a3a;">21</span>
<div class="a" style="left:0px;top:789px;width:52px;height:1px;background:#d4d4d4;"></div>
<div class="a" style="left:53px;top:764px;width:1841px;height:26px;background:#eaeaea;"></div>
<div class="a" style="left:767px;top:764px;width:104px;height:26px;background:#99ff99;border-bottom:1px solid #fff;"></div>
<div class="a" style="left:972px;top:764px;width:142px;height:26px;background:#99ff99;border-bottom:1px solid #fff;"></div>
<span class="t " style="top:767.07px;left:56.5px;transform-origin:0 0;font-size:20px;line-height:20px;color:#000;font-weight:bold;transform:scaleX(0.9600);">3</span>
<span class="t " style="top:767.07px;left:138.6px;transform-origin:0 0;font-size:20px;line-height:20px;color:#000;font-weight:bold;transform:scaleX(0.8099);">Planning</span>
<span class="t " style="top:767.07px;left:454px;transform-origin:0 0;font-size:20px;line-height:20px;color:#000;transform:scaleX(0.8578);">[Name]</span>
<span class="t " style="top:767.07px;right:1052px;transform-origin:100% 0;font-size:20px;line-height:20px;color:#000;">10/2/15</span>
<span class="t " style="top:767.07px;right:951px;transform-origin:100% 0;font-size:20px;line-height:20px;color:#000;">10/8/15</span>
<span class="t " style="top:767.07px;left:998.44px;transform-origin:0 0;font-size:20px;line-height:20px;color:#000;">6</span>
<span class="t " style="top:767.07px;left:1054.48px;transform-origin:0 0;font-size:20px;line-height:20px;color:#000;">17%</span>
<span class="t " style="top:767.07px;left:1132.94px;transform-origin:0 0;font-size:20px;line-height:20px;color:#000;">5</span>
<span class="t " style="top:767.07px;left:1182.94px;transform-origin:0 0;font-size:20px;line-height:20px;color:#000;">1</span>
<span class="t " style="top:767.07px;left:1232.94px;transform-origin:0 0;font-size:20px;line-height:20px;color:#000;">5</span>
<div class="a" style="left:1365px;top:764px;width:6px;height:26px;background:#6699ff;border-bottom:1px solid #fff;"></div>
<div class="a" style="left:1377px;top:764px;width:24px;height:26px;background:#5f5f5f;border-bottom:1px solid #fff;"></div>
<div class="a" style="left:1371px;top:764px;width:6px;height:26px;background:#ff0000;border-bottom:1px solid #fff;"></div>
<span class="t " style="top:789.24px;left:12.59px;transform-origin:0 0;font-size:25px;line-height:25px;color:#3a3a3a;">22</span>
<div class="a" style="left:0px;top:815px;width:52px;height:1px;background:#d4d4d4;"></div>
<div class="a" style="left:53px;top:815px;width:1841px;height:1px;background:#e1e1e1;"></div>
<div class="a" style="left:767px;top:790px;width:104px;height:26px;background:#ccffcc;border-bottom:1px solid #fff;"></div>
<div class="a" style="left:972px;top:790px;width:142px;height:26px;background:#ccffcc;border-bottom:1px solid #fff;"></div>
<span class="t " style="top:793.07px;left:56.5px;transform-origin:0 0;font-size:20px;line-height:20px;color:#000;transform:scaleX(0.9600);">3.1</span>
<span class="t " style="top:793.07px;left:138.6px;transform-origin:0 0;font-size:20px;line-height:20px;color:#000;transform:scaleX(0.8142);">Website title</span>
<span class="t " style="top:793.07px;right:1052px;transform-origin:100% 0;font-size:20px;line-height:20px;color:#000;">10/2/15</span>
<span class="t " style="top:793.07px;right:951px;transform-origin:100% 0;font-size:20px;line-height:20px;color:#000;">10/3/15</span>
<span class="t " style="top:793.07px;left:998.44px;transform-origin:0 0;font-size:20px;line-height:20px;color:#000;">1</span>
<span class="t " style="top:793.07px;left:1048.92px;transform-origin:0 0;font-size:20px;line-height:20px;color:#000;">100%</span>
<span class="t " style="top:793.07px;left:1132.94px;transform-origin:0 0;font-size:20px;line-height:20px;color:#000;">1</span>
<span class="t " style="top:793.07px;left:1182.94px;transform-origin:0 0;font-size:20px;line-height:20px;color:#000;">1</span>
<span class="t " style="top:793.07px;left:1232.94px;transform-origin:0 0;font-size:20px;line-height:20px;color:#000;">0</span>
<div class="a" style="left:1365px;top:790px;width:7px;height:26px;background:#99ccff;border-bottom:1px solid #fff;"></div>
<div class="a" style="left:1371px;top:790px;width:6px;height:26px;background:#ff0000;border-bottom:1px solid #fff;"></div>
<span class="t " style="top:815.24px;left:12.59px;transform-origin:0 0;font-size:25px;line-height:25px;color:#3a3a3a;">23</span>
<div class="a" style="left:0px;top:841px;width:52px;height:1px;background:#d4d4d4;"></div>
<div class="a" style="left:53px;top:841px;width:1841px;height:1px;background:#e1e1e1;"></div>
<div class="a" style="left:767px;top:816px;width:104px;height:26px;background:#ccffcc;border-bottom:1px solid #fff;"></div>
<div class="a" style="left:972px;top:816px;width:142px;height:26px;background:#ccffcc;border-bottom:1px solid #fff;"></div>
<span class="t " style="top:819.07px;left:56.5px;transform-origin:0 0;font-size:20px;line-height:20px;color:#000;transform:scaleX(0.9600);">3.2</span>
<span class="t " style="top:819.07px;left:138.6px;transform-origin:0 0;font-size:20px;line-height:20px;color:#000;transform:scaleX(0.8128);">Host selection &amp; registration</span>
<span class="t " style="top:819.07px;right:1052px;transform-origin:100% 0;font-size:20px;line-height:20px;color:#000;">10/3/15</span>
<span class="t " style="top:819.07px;right:951px;transform-origin:100% 0;font-size:20px;line-height:20px;color:#000;">10/4/15</span>
<span class="t " style="top:819.07px;left:998.44px;transform-origin:0 0;font-size:20px;line-height:20px;color:#000;">1</span>
<span class="t " style="top:819.07px;left:1060.05px;transform-origin:0 0;font-size:20px;line-height:20px;color:#000;">0%</span>
<span class="t " style="top:819.07px;left:1132.94px;transform-origin:0 0;font-size:20px;line-height:20px;color:#000;">0</span>
<span class="t " style="top:819.07px;left:1182.94px;transform-origin:0 0;font-size:20px;line-height:20px;color:#000;">0</span>
<span class="t " style="top:819.07px;left:1232.94px;transform-origin:0 0;font-size:20px;line-height:20px;color:#000;">1</span>
<div class="a" style="left:1371px;top:816px;width:6px;height:26px;background:#ff0000;border-bottom:1px solid #fff;"></div>
<span class="t " style="top:841.24px;left:12.59px;transform-origin:0 0;font-size:25px;line-height:25px;color:#3a3a3a;">24</span>
<div class="a" style="left:0px;top:867px;width:52px;height:1px;background:#d4d4d4;"></div>
<div class="a" style="left:53px;top:867px;width:1841px;height:1px;background:#e1e1e1;"></div>
<div class="a" style="left:767px;top:842px;width:104px;height:26px;background:#ccffcc;border-bottom:1px solid #fff;"></div>
<div class="a" style="left:972px;top:842px;width:142px;height:26px;background:#ccffcc;border-bottom:1px solid #fff;"></div>
<span class="t " style="top:845.07px;left:56.5px;transform-origin:0 0;font-size:20px;line-height:20px;color:#000;transform:scaleX(0.9600);">3.3</span>
<span class="t " style="top:845.07px;left:138.6px;transform-origin:0 0;font-size:20px;line-height:20px;color:#000;transform:scaleX(0.8195);">Domain name selection &amp; registration</span>
<span class="t " style="top:845.07px;right:1052px;transform-origin:100% 0;font-size:20px;line-height:20px;color:#000;">10/4/15</span>
<span class="t " style="top:845.07px;right:951px;transform-origin:100% 0;font-size:20px;line-height:20px;color:#000;">10/5/15</span>
<span class="t " style="top:845.07px;left:998.44px;transform-origin:0 0;font-size:20px;line-height:20px;color:#000;">1</span>
<span class="t " style="top:845.07px;left:1060.05px;transform-origin:0 0;font-size:20px;line-height:20px;color:#000;">0%</span>
<span class="t " style="top:845.07px;left:1132.94px;transform-origin:0 0;font-size:20px;line-height:20px;color:#000;">1</span>
<span class="t " style="top:845.07px;left:1182.94px;transform-origin:0 0;font-size:20px;line-height:20px;color:#000;">0</span>
<span class="t " style="top:845.07px;left:1232.94px;transform-origin:0 0;font-size:20px;line-height:20px;color:#000;">1</span>
<div class="a" style="left:1377px;top:842px;width:7px;height:26px;background:#808080;border-bottom:1px solid #fff;"></div>
<div class="a" style="left:1371px;top:842px;width:6px;height:26px;background:#ff0000;border-bottom:1px solid #fff;"></div>
<span class="t " style="top:867.24px;left:12.59px;transform-origin:0 0;font-size:25px;line-height:25px;color:#3a3a3a;">25</span>
<div class="a" style="left:0px;top:893px;width:52px;height:1px;background:#d4d4d4;"></div>
<div class="a" style="left:53px;top:893px;width:1841px;height:1px;background:#e1e1e1;"></div>
<div class="a" style="left:767px;top:868px;width:104px;height:26px;background:#ccffcc;border-bottom:1px solid #fff;"></div>
<div class="a" style="left:972px;top:868px;width:142px;height:26px;background:#ccffcc;border-bottom:1px solid #fff;"></div>
<span class="t " style="top:871.07px;left:56.5px;transform-origin:0 0;font-size:20px;line-height:20px;color:#000;transform:scaleX(0.9600);">3.4</span>
<span class="t " style="top:871.07px;left:138.6px;transform-origin:0 0;font-size:20px;line-height:20px;color:#000;transform:scaleX(0.8195);">Domain name selection &amp; registration</span>
<span class="t " style="top:871.07px;right:1052px;transform-origin:100% 0;font-size:20px;line-height:20px;color:#000;">10/5/15</span>
<span class="t " style="top:871.07px;right:951px;transform-origin:100% 0;font-size:20px;line-height:20px;color:#000;">10/6/15</span>
<span class="t " style="top:871.07px;left:998.44px;transform-origin:0 0;font-size:20px;line-height:20px;color:#000;">1</span>
<span class="t " style="top:871.07px;left:1060.05px;transform-origin:0 0;font-size:20px;line-height:20px;color:#000;">0%</span>
<span class="t " style="top:871.07px;left:1132.94px;transform-origin:0 0;font-size:20px;line-height:20px;color:#000;">2</span>
<span class="t " style="top:871.07px;left:1182.94px;transform-origin:0 0;font-size:20px;line-height:20px;color:#000;">0</span>
<span class="t " style="top:871.07px;left:1232.94px;transform-origin:0 0;font-size:20px;line-height:20px;color:#000;">1</span>
<div class="a" style="left:1383px;top:868px;width:7px;height:26px;background:#808080;border-bottom:1px solid #fff;"></div>
<div class="a" style="left:1371px;top:868px;width:6px;height:26px;background:#ff0000;border-bottom:1px solid #fff;"></div>
<span class="t " style="top:893.24px;left:12.59px;transform-origin:0 0;font-size:25px;line-height:25px;color:#3a3a3a;">26</span>
<div class="a" style="left:0px;top:919px;width:52px;height:1px;background:#d4d4d4;"></div>
<div class="a" style="left:53px;top:919px;width:1841px;height:1px;background:#e1e1e1;"></div>
<div class="a" style="left:767px;top:894px;width:104px;height:26px;background:#ccffcc;border-bottom:1px solid #fff;"></div>
<div class="a" style="left:972px;top:894px;width:142px;height:26px;background:#ccffcc;border-bottom:1px solid #fff;"></div>
<span class="t " style="top:897.07px;left:138.6px;transform-origin:0 0;font-size:20px;line-height:20px;color:#000;transform:scaleX(0.8197);">Website structure &amp; information</span>
<span class="t " style="top:897.07px;right:1052px;transform-origin:100% 0;font-size:20px;line-height:20px;color:#000;">10/6/15</span>
<span class="t " style="top:897.07px;right:951px;transform-origin:100% 0;font-size:20px;line-height:20px;color:#000;">10/7/15</span>
<span class="t " style="top:897.07px;left:998.44px;transform-origin:0 0;font-size:20px;line-height:20px;color:#000;">1</span>
<span class="t " style="top:897.07px;left:1060.05px;transform-origin:0 0;font-size:20px;line-height:20px;color:#000;">0%</span>
<span class="t " style="top:897.07px;left:1132.94px;transform-origin:0 0;font-size:20px;line-height:20px;color:#000;">2</span>
<span class="t " style="top:897.07px;left:1182.94px;transform-origin:0 0;font-size:20px;line-height:20px;color:#000;">0</span>
<span class="t " style="top:897.07px;left:1232.94px;transform-origin:0 0;font-size:20px;line-height:20px;color:#000;">1</span>
<div class="a" style="left:1389px;top:894px;width:7px;height:26px;background:#808080;border-bottom:1px solid #fff;"></div>
<div class="a" style="left:1371px;top:894px;width:6px;height:26px;background:#ff0000;border-bottom:1px solid #fff;"></div>
<span class="t " style="top:919.24px;left:12.59px;transform-origin:0 0;font-size:25px;line-height:25px;color:#3a3a3a;">27</span>
<div class="a" style="left:0px;top:945px;width:52px;height:1px;background:#d4d4d4;"></div>
<div class="a" style="left:53px;top:945px;width:1841px;height:1px;background:#e1e1e1;"></div>
<div class="a" style="left:767px;top:920px;width:104px;height:26px;background:#ccffcc;border-bottom:1px solid #fff;"></div>
<div class="a" style="left:972px;top:920px;width:142px;height:26px;background:#ccffcc;border-bottom:1px solid #fff;"></div>
<span class="t " style="top:923.07px;left:138.6px;transform-origin:0 0;font-size:20px;line-height:20px;color:#000;transform:scaleX(0.8328);">Validate wireframe</span>
<span class="t " style="top:923.07px;right:1052px;transform-origin:100% 0;font-size:20px;line-height:20px;color:#000;">10/7/15</span>
<span class="t " style="top:923.07px;right:951px;transform-origin:100% 0;font-size:20px;line-height:20px;color:#000;">10/8/15</span>
<span class="t " style="top:923.07px;left:998.44px;transform-origin:0 0;font-size:20px;line-height:20px;color:#000;">1</span>
<span class="t " style="top:923.07px;left:1060.05px;transform-origin:0 0;font-size:20px;line-height:20px;color:#000;">0%</span>
<span class="t " style="top:923.07px;left:1132.94px;transform-origin:0 0;font-size:20px;line-height:20px;color:#000;">2</span>
<span class="t " style="top:923.07px;left:1182.94px;transform-origin:0 0;font-size:20px;line-height:20px;color:#000;">0</span>
<span class="t " style="top:923.07px;left:1232.94px;transform-origin:0 0;font-size:20px;line-height:20px;color:#000;">1</span>
<div class="a" style="left:1395px;top:920px;width:7px;height:26px;background:#808080;border-bottom:1px solid #fff;"></div>
<div class="a" style="left:1371px;top:920px;width:6px;height:26px;background:#ff0000;border-bottom:1px solid #fff;"></div>
<span class="t " style="top:945.24px;left:12.59px;transform-origin:0 0;font-size:25px;line-height:25px;color:#3a3a3a;">28</span>
<div class="a" style="left:0px;top:971px;width:52px;height:1px;background:#d4d4d4;"></div>
<div class="a" style="left:53px;top:946px;width:1841px;height:26px;background:#eaeaea;"></div>
<div class="a" style="left:767px;top:946px;width:104px;height:26px;background:#99ff99;border-bottom:1px solid #fff;"></div>
<div class="a" style="left:972px;top:946px;width:142px;height:26px;background:#99ff99;border-bottom:1px solid #fff;"></div>
<span class="t " style="top:949.07px;left:56.5px;transform-origin:0 0;font-size:20px;line-height:20px;color:#000;font-weight:bold;transform:scaleX(0.9600);">1</span>
<span class="t " style="top:949.07px;left:138.6px;transform-origin:0 0;font-size:20px;line-height:20px;color:#000;font-weight:bold;transform:scaleX(0.8236);">Layout</span>
<span class="t " style="top:949.07px;left:454px;transform-origin:0 0;font-size:20px;line-height:20px;color:#000;transform:scaleX(0.8578);">[Name]</span>
<span class="t " style="top:949.07px;right:1052px;transform-origin:100% 0;font-size:20px;line-height:20px;color:#000;">10/10/15</span>
<span class="t " style="top:949.07px;right:951px;transform-origin:100% 0;font-size:20px;line-height:20px;color:#000;">10/17/15</span>
<span class="t " style="top:949.07px;left:998.44px;transform-origin:0 0;font-size:20px;line-height:20px;color:#000;">7</span>
<span class="t " style="top:949.07px;left:1060.05px;transform-origin:0 0;font-size:20px;line-height:20px;color:#000;">0%</span>
<span class="t " style="top:949.07px;left:1132.94px;transform-origin:0 0;font-size:20px;line-height:20px;color:#000;">5</span>
<span class="t " style="top:949.07px;left:1182.94px;transform-origin:0 0;font-size:20px;line-height:20px;color:#000;">0</span>
<span class="t " style="top:949.07px;left:1232.94px;transform-origin:0 0;font-size:20px;line-height:20px;color:#000;">7</span>
<div class="a" style="left:1413px;top:946px;width:42px;height:26px;background:#5f5f5f;border-bottom:1px solid #fff;"></div>
<div class="a" style="left:1371px;top:946px;width:6px;height:26px;background:#ff0000;border-bottom:1px solid #fff;"></div>
<div class="a" style="left:136px;top:595px;width:314px;height:56px;overflow:hidden"><div class="wrap" style="left:3px;bottom:-1px;width:382px;transform:scaleX(0.82);">Confirmation of site objectives (corporate, marketing, etc.)Confirmation of site objectives (corporate, marketing, etc.)</div></div>
<div class="a" style="left:136px;top:652px;width:314px;height:50px;overflow:hidden"><div class="wrap" style="left:3px;bottom:-1px;width:382px;transform:scaleX(0.82);">Plan interactions, technologies &amp; functionalities</div></div>
<div class="a" style="left:0px;top:972px;width:53px;height:4px;background:#fff;"></div>
<div class="a" style="left:0;top:972px;width:52px;height:4px;overflow:hidden"><span class="t" style="left:12.6px;top:-2.4px;font-size:25px;line-height:25px;color:#3a3a3a">29</span></div>
<div class="a" style="left:767px;top:972px;width:104px;height:4px;background:#ccffcc;"></div>
<div class="a" style="left:972px;top:972px;width:142px;height:4px;background:#ccffcc;"></div>
<div class="a" style="left:1371px;top:972px;width:6px;height:4px;background:#ff0000;"></div>
<div class="a" style="left:1413px;top:972px;width:13px;height:4px;background:#808080;"></div>
<div class="a" style="left:1895px;top:153px;width:25px;height:823px;background:#f3f3f3;"></div>
<div class="a" style="left:1898px;top:155px;width:19px;height:19px;background:#fff;border:1px solid #c6c6c6;"></div>
<svg style="left:1903px;top:161px" width="9" height="6" viewBox="0 0 9 6"><path d="M4.5 0.5 L8.5 5.2 H0.5 Z" fill="#777"/></svg>
<div class="a" style="left:1898px;top:203px;width:19px;height:100px;background:#fff;border:1px solid #c6c6c6;"></div>
<div class="a" style="left:1898px;top:958px;width:19px;height:19px;background:#fff;border:1px solid #c6c6c6;"></div>
<svg style="left:1903px;top:965px" width="9" height="6" viewBox="0 0 9 6"><path d="M0.5 0.6 H8.5 L4.5 5.4 Z" fill="#777"/></svg>
<div class="a" style="left:0px;top:976px;width:1920px;height:29px;background:#f3f3f3;border-top:1px solid #c6c6c6;"></div>
<svg style="left:27px;top:984px" width="40" height="12" viewBox="0 0 40 12"><path d="M6 1 V11 L1 6 Z" fill="#c8c8c8"/><path d="M30 1 V11 L35 6 Z" fill="#c8c8c8"/></svg>
<div class="a" style="left:103px;top:976px;width:114px;height:26px;background:#fff;border-left:1px solid #c6c6c6;border-right:1px solid #c6c6c6;border-bottom:2px solid #217346;"></div>
<span class="t " style="top:978.61px;left:115px;transform-origin:0 0;font-size:17px;line-height:17px;color:#217346;font-weight:bold;transform:scaleX(1.0081);">GanttChart</span>
<span class="t " style="top:978.61px;left:230px;transform-origin:0 0;font-size:17px;line-height:17px;color:#444444;transform:scaleX(1.0081);">GanttChartPro</span>
<span class="t " style="top:978.61px;left:370.5px;transform-origin:0 0;font-size:17px;line-height:17px;color:#444444;transform:scaleX(0.9633);">TermsOfUse</span>
<div class="a" style="left:356px;top:980px;width:1px;height:21px;background:#b9b9b9;"></div>
<div class="a" style="left:476px;top:980px;width:1px;height:21px;background:#b9b9b9;"></div>
<svg style="left:510px;top:981px" width="20" height="20" viewBox="0 0 20 20"><circle cx="10" cy="10" r="8.6" fill="none" stroke="#c3c3c3" stroke-width="1.3"/><path d="M5.5 10H14.5M10 5.5V14.5" stroke="#c3c3c3" stroke-width="1.6"/></svg>
<div class="a" style="left:1149px;top:985px;width:2px;height:2px;background:#b4b4b4;"></div>
<div class="a" style="left:1149px;top:989px;width:2px;height:2px;background:#b4b4b4;"></div>
<div class="a" style="left:1149px;top:993px;width:2px;height:2px;background:#b4b4b4;"></div>
<div class="a" style="left:1167px;top:981px;width:729px;height:19px;background:#e9e9e9;"></div>
<div class="a" style="left:1167px;top:981px;width:19px;height:19px;background:#fff;border:1px solid #c6c6c6;"></div>
<div class="a" style="left:1876px;top:981px;width:20px;height:19px;background:#fff;border:1px solid #c6c6c6;"></div>
<div class="a" style="left:1185px;top:981px;width:459px;height:19px;background:#fff;border:1px solid #c6c6c6;"></div>
<svg style="left:1172px;top:985px" width="7" height="11" viewBox="0 0 7 11"><path d="M6 0.8 V10.2 L0.8 5.5 Z" fill="#666"/></svg>
<svg style="left:1883px;top:985px" width="7" height="11" viewBox="0 0 7 11"><path d="M1 0.8 V10.2 L6.2 5.5 Z" fill="#666"/></svg>
<div class="a" style="left:0px;top:1005px;width:1920px;height:27px;background:#217346;"></div>
<span class="t " style="top:1012.0px;left:8px;transform-origin:0 0;font-size:13px;line-height:13px;color:#fff;transform:scaleX(0.8483);">READY</span>
<div class="a" style="left:1582px;top:1005px;width:41px;height:27px;background:#0f6b3a;"></div>
<svg style="left:1590px;top:1005px" width="110" height="27" viewBox="1590 1005 110 27">
<g fill="none" stroke="#fff" stroke-width="1.25">
<rect x="1595.6" y="1011.6" width="12" height="12"/><path d="M1599.6 1011.6V1023.6M1603.6 1011.6V1023.6M1595.6 1015.6H1607.6M1595.6 1019.6H1607.6"/>
<rect x="1636.6" y="1011.6" width="13" height="12"/><rect x="1639.7" y="1013.8" width="6.8" height="7.8" stroke-width="1"/>
<path d="M1641.3 1015.8H1645M1641.3 1017.7H1645M1641.3 1019.6H1645" stroke-width="0.9"/>
<rect x="1677.6" y="1011.6" width="13" height="12"/>
<path d="M1678 1018.6 H1686.8 V1012" stroke-width="1"/>
</g>
<rect x="1678.3" y="1012.2" width="3" height="5.8" fill="#e9f1ec"/><rect x="1682.7" y="1012.2" width="3.2" height="5.8" fill="#e9f1ec"/>
</svg>
<div class="a" style="left:1710px;top:1017px;width:9px;height:2px;background:#fff;"></div>
<div class="a" style="left:1723px;top:1018px;width:125px;height:1px;background:#fff;"></div>
<div class="a" style="left:1785px;top:1014px;width:1px;height:8px;background:#fff;"></div>
<div class="a" style="left:1794px;top:1011px;width:5px;height:14px;background:#fff;"></div>
<div class="a" style="left:1852px;top:1017px;width:12px;height:2.4px;background:#fff;"></div>
<div class="a" style="left:1856.8px;top:1012px;width:2.4px;height:12px;background:#fff;"></div>
<span class="t " style="top:1012.0px;left:1880px;transform-origin:0 0;font-size:13px;line-height:13px;color:#fff;transform:scaleX(0.9023);">150%</span>
<div class="a" style="left:0px;top:1032px;width:1920px;height:48px;background:#613b2f;background:linear-gradient(90deg,#653d31 0%,#633c30 40%,#603b2f 70%,#613d32 100%);"></div>
<svg style="left:13.6px;top:1038.4px" width="33" height="34" viewBox="0 0 34 35">
<path d="M0.5 5.4 L14.2 3.4 V16.6 H0.5 Z M15.9 3.1 L33.4 0.5 V16.6 H15.9 Z M0.5 18.2 H14.2 V31.4 L0.5 29.5 Z M15.9 18.2 H33.4 V34.3 L15.9 31.7 Z" fill="#fff"/></svg>
<div class="a" style="left:77px;top:1037px;width:38px;height:38px;background:#008a00;"></div>
<svg style="left:77px;top:1037px" width="38" height="38" viewBox="77 1037 38 38">
<path d="M82 1050.3 L108.9 1047.2 V1068.6 L103.6 1071 L82 1066.5 Z" fill="#fff"/>
<path d="M86.7 1049.6 C86.7 1043 89.5 1041.2 91.4 1041.2 C94 1041.2 96 1044 96.2 1048.4 M90.7 1047.4 C91 1043.4 95 1041.6 97.5 1042.3 C99.5 1043 100.2 1045 100.4 1047.6" fill="none" stroke="#fff" stroke-width="1.15"/>
<path d="M86 1053.7 L91.3 1053.1 V1058 H86 Z M92.3 1053 L98.9 1052.3 V1058 H92.3 Z M86 1059 H91.3 V1063.6 L86 1063 Z M92.3 1059 H98.9 V1064.5 L92.3 1063.7 Z" fill="#008a00"/>
</svg>
<div class="a" style="left:135px;top:1033px;width:69.4px;height:46px;background:#80625a;border:1px solid #a08a83;"></div>
<svg style="left:130px;top:1032px" width="80" height="48" viewBox="130 1032 80 48">
<defs><linearGradient id="fg" x1="0" y1="0" x2="1" y2="1"><stop offset="0" stop-color="#fbf0b4"/><stop offset="0.45" stop-color="#f6e08a"/><stop offset="1" stop-color="#efcd62"/></linearGradient>
<linearGradient id="bg2" x1="0" y1="0" x2="0" y2="1"><stop offset="0" stop-color="#a4daf3"/><stop offset="1" stop-color="#4f9fdc"/></linearGradient></defs>
<path d="M151.2 1038.8 Q151.2 1037 153 1037 H167 Q168.4 1037 168.4 1038.6 V1044 H151.2 Z" fill="#efd77e"/>
<path d="M162.4 1041.2 Q162.4 1039.5 164.2 1039.5 H186 Q187.6 1039.5 187.6 1041.2 V1047 H162.4 Z" fill="#efd580"/>
<path d="M171.6 1044 Q171.6 1042.4 173.4 1042.4 H187 Q188.6 1042.4 188.6 1044 V1049 H171.6 Z" fill="#f0d884"/>
<rect x="154.6" y="1038" width="2.6" height="3" fill="#2f9a44"/><rect x="157.6" y="1038.4" width="8" height="2.8" fill="#fff"/>
<rect x="164" y="1040.8" width="2.6" height="2.6" fill="#d8322a"/><rect x="167" y="1041" width="8" height="2.4" fill="#fff"/>
<rect x="174.6" y="1043.4" width="2.6" height="3" fill="#2a7fd0"/><rect x="177.6" y="1043.6" width="7.4" height="2.8" fill="#fff"/>
<path d="M150 1046.4 Q150 1044.9 151.6 1044.9 H170.2 L172 1047 H186.6 Q188 1047 188 1048.6 V1071.2 Q188 1072.6 186.6 1072.6 H151.6 Q150 1072.6 150 1071.2 Z" fill="url(#fg)" stroke="#e6c65c" stroke-width="0.6"/>
<path d="M154.4 1061.4 Q154.4 1059.2 156.6 1059.2 H181.8 Q184 1059.2 184 1061.4 V1073.6 Q184 1074.9 182.6 1074.9 H176.6 Q175.4 1074.9 175.4 1073.6 V1068 H163 V1073.6 Q163 1074.9 161.6 1074.9 H155.8 Q154.4 1074.9 154.4 1073.6 Z" fill="url(#bg2)" stroke="#4a96d2" stroke-width="0.5"/>
</svg>
<div class="a" style="left:208px;top:1033px;width:69.2px;height:46px;background:#80625a;border:1px solid #a08a83;"></div>
<svg style="left:223.7px;top:1037.75px" width="36" height="36" viewBox="0 0 38 38">
<defs><radialGradient id="cb" cx="0.5" cy="0.3" r="0.8"><stop offset="0" stop-color="#5a9be8"/><stop offset="1" stop-color="#2b62bd"/></radialGradient></defs>
<circle cx="19" cy="19" r="18.6" fill="#e0362b"/>
<path d="M26.27 23.2 L18.31 37.6 A18.6 18.6 0 0 0 35.62 10.6 L19 10.6 L19 19 Z" fill="#fbd00e"/>
<path d="M11.73 23.2 L3.27 8.9 A18.6 18.6 0 0 0 18.31 37.6 L26.27 23.2 L19 19 Z" fill="#4bb548"/>
<circle cx="19" cy="19" r="8.7" fill="#f4f4f4"/>
<circle cx="19" cy="19" r="7" fill="url(#cb)"/>
</svg>
<div class="a" style="left:281px;top:1033px;width:69.2px;height:46px;background:#9c837c;border:1.2px solid #f3eeec;background:linear-gradient(180deg,#9a7f77,#a9958d);"></div>
<svg style="left:290px;top:1032px" width="50" height="48" viewBox="290 1032 50 48">
<rect x="316" y="1041.6" width="16.1" height="27.5" rx="1.8" fill="#fff" stroke="#1e7145" stroke-width="1.5"/>
<g fill="#1e7145">
<rect x="318" y="1046.2" width="3.7" height="2.5"/><rect x="323.4" y="1046.2" width="5.6" height="2.5"/>
<rect x="318" y="1050.2" width="3.7" height="2.5"/><rect x="323.4" y="1050.2" width="5.6" height="2.5"/>
<rect x="318" y="1054.2" width="3.7" height="2.5"/><rect x="323.4" y="1054.2" width="5.6" height="2.5"/>
<rect x="318" y="1058.2" width="3.7" height="2.5"/><rect x="323.4" y="1058.2" width="5.6" height="2.5"/>
<rect x="318" y="1062.2" width="3.7" height="2.6"/><rect x="323.4" y="1062.2" width="5.6" height="2.6"/>
</g>
<path d="M297 1042.2 L317.9 1037.8 V1074 L297 1069.8 Z" fill="#1f7849"/>
<path d="M302.1 1048.2 H305.5 L307.5 1052.9 L309.6 1048.2 H312.8 L309.2 1055.5 L312.9 1063.1 H309.5 L307.4 1058.2 L305.3 1063.1 H302 L305.7 1055.5 Z" fill="#fff"/>
</svg>
<svg style="left:1670px;top:1032px" width="160" height="48" viewBox="1670 1032 160 48">
<path d="M1681.2 1059.4 L1686.4 1053.7 L1691.6 1059.4 Z" fill="#fff"/>
<path d="M1708.4 1047.4 V1066.2" stroke="#fff" stroke-width="1.6" fill="none"/>
<path d="M1709.8 1048.9 Q1714 1047.6 1716 1049.6 Q1717.6 1051.4 1718 1053 Q1721.6 1054.6 1725.4 1052.9 Q1724.6 1056.8 1722.2 1058.8 Q1719.6 1059.6 1717.6 1058.2 Q1714 1055.6 1709.8 1057.2 Z" fill="#fff"/>
<rect x="1745.2" y="1049.2" width="9.8" height="16.3" rx="1.2" fill="none" stroke="#fff" stroke-width="1.5"/><rect x="1747.6" y="1047.4" width="5" height="2" fill="#fff"/><rect x="1746.9" y="1054.6" width="6.4" height="9.4" fill="#fff"/>
<g fill="#fff"><rect x="1767.5" y="1061.6" width="2.5" height="3.8"/><rect x="1770.8" y="1058.7" width="2.5" height="6.7"/><rect x="1773.9" y="1055.8" width="2.5" height="9.6"/><rect x="1777.1" y="1052.8" width="2.4" height="12.6"/><rect x="1780" y="1049.5" width="2.5" height="15.9"/></g>
<path d="M1798.3 1052.8 H1801.6 L1807.5 1047.4 V1066.2 L1801.6 1061.2 H1798.3 Z" fill="#fff"/><path d="M1812 1053 Q1814.6 1057 1812 1061" fill="none" stroke="#e8e0dd" stroke-width="1"/>
</svg>
<span class="t " style="top:1038.8px;left:1842.5px;transform-origin:0 0;font-size:15px;line-height:15px;color:#fff;transform:scaleX(0.9217);">7:47 PM</span>
<span class="t " style="top:1060.8px;left:1831.5px;transform-origin:0 0;font-size:15px;line-height:15px;color:#fff;transform:scaleX(0.9856);">10/12/2015</span>
</div>
</body></html>
